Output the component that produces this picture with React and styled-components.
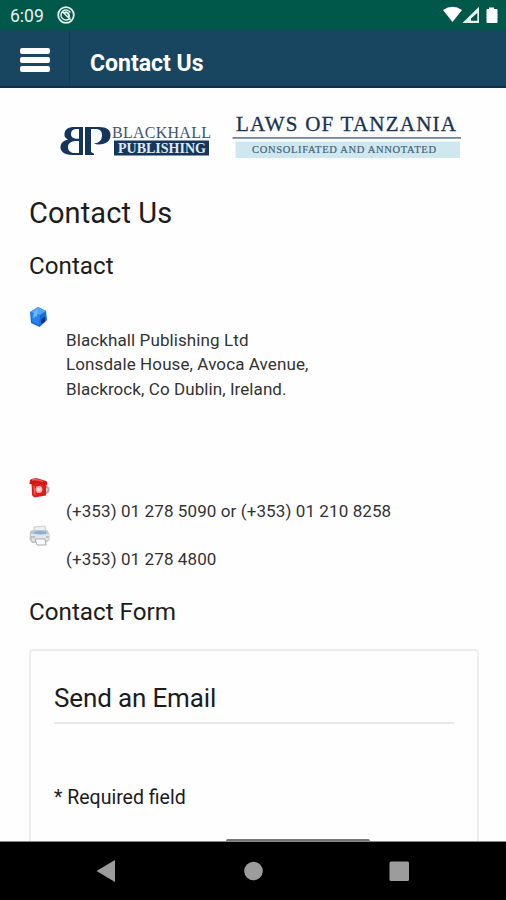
import React from "react";
import styled, { createGlobalStyle } from "styled-components";

const Global = createGlobalStyle`
  * { box-sizing: border-box; }
  body { margin: 0; background: #fff; }
  h1, h2, h3, p { margin: 0; font-weight: 400; }
`;

const Screen = styled.div`
  width: 506px;
  height: 900px;
  display: flex;
  flex-direction: column;
  overflow: hidden;
  background: #fefefe;
  color: #1c1c1c;
  font-family: Roboto, "Liberation Sans", sans-serif;
`;

const StatusBar = styled.div`
  flex: none;
  height: 30px;
  display: flex;
  align-items: center;
  justify-content: space-between;
  padding: 0 7px 0 10px;
  background: #00584b;
  color: #e8f3ef;
`;

const StatusGroup = styled.div`
  display: flex;
  align-items: center;
  gap: ${(p) => p.$gap || 0}px;
`;

const Clock = styled.span`
  width: 34px;
  font-size: 17.5px;
  line-height: 30px;
  padding-top: 2px;
  white-space: nowrap;
`;

const AppBar = styled.header`
  flex: none;
  height: 58px;
  display: flex;
  background: #18455f;
  border-bottom: 2px solid #0d2f50;
  margin-bottom: 1px;
`;

const MenuButton = styled.button`
  width: 70px;
  padding: 3px 0 0 20px;
  display: flex;
  flex-direction: column;
  justify-content: center;
  gap: 3px;
  border: 0;
  border-right: 1px solid #123c57;
  background: none;
`;

const MenuBar = styled.span`
  width: 30px;
  height: 6px;
  border-radius: 2px;
  background: #fff;
`;

const BarTitle = styled.div`
  padding: 6px 0 0 20px;
  font-size: 23px;
  font-weight: 700;
  line-height: 56px;
  letter-spacing: ${(p) => p.$track}px;
  color: #fff;
`;

const Content = styled.main`
  flex: 1;
  min-height: 0;
  overflow: hidden;
  padding: 0 27px 0 29px;
`;

const Logos = styled.div`
  height: 106px;
  margin: 0 -27px 0 -29px;
`;

const Heading = styled.h2`
  font-size: ${(p) => p.$size}px;
  line-height: 36px;
  letter-spacing: ${(p) => p.$track}px;
  margin-top: ${(p) => p.$top}px;
  white-space: nowrap;
`;

const Details = styled.dl`
  margin: 21.6px 0 0;
  font-size: 17px;
  line-height: 24.4px;
  color: #333;
`;

const Term = styled.dt`
  height: 22.2px;
  display: flex;
  align-items: center;
  svg { display: block; }
`;

const Value = styled.dd`
  margin: 0 0 ${(p) => p.$bottom || 0}px 37px;
`;

const Line = styled.div`
  letter-spacing: ${(p) => p.$track}px;
  white-space: nowrap;
`;

const FormCard = styled.form`
  margin-top: 18.6px;
  height: 300px;
  padding: 29px 23px 0 23px;
  border: 2px solid #ededed;
  border-radius: 4px;
`;

const Legend = styled.h3`
  height: 44px;
  font-size: 26px;
  line-height: 36px;
  letter-spacing: ${(p) => p.$track}px;
  border-bottom: 2px solid #e8e8e8;
`;

const Required = styled.p`
  margin-top: 62px;
  font-size: 19.5px;
  line-height: 24px;
  letter-spacing: ${(p) => p.$track}px;
`;

const Field = styled.input`
  display: block;
  width: 144px;
  height: 30px;
  margin: 29px 0 0 172px;
  border: 2px solid #777;
  border-radius: 2px;
`;

const NavBar = styled.nav`
  flex: none;
  height: 59px;
  border-top: 1px solid #888;
  background: #000;
  svg { display: block; }
`;

const SerifText = styled.text`
  font-family: "Liberation Serif", serif;
  font-size: ${(p) => p.$size}px;
  font-weight: ${(p) => p.$weight || 400};
`;

function NotificationIcon() {
  return (
    <svg width="18" height="18" viewBox="0 0 18 18" fill="none" stroke="#e4f1ed" strokeWidth="1.8">
      <circle cx="9" cy="9" r="7.8" />
      <path d="M13.3 11.5A5 5 0 1 1 13.4 6.7M5 5.2L13.5 13.7" strokeWidth="1.5" />
      <path d="M7 7.2q3-2.2 4.8 1.3l.2 2.6" strokeWidth="2" />
    </svg>
  );
}

function StatusIcons() {
  return (
    <svg width="56" height="18" viewBox="0 0 56 18">
      <path d="M0 4Q9.500 -2.500 19 4L9.500 16Z" fill="#fff" />
      <path d="M36 .8V17H19.500Z" fill="#e8f2ef" />
      <path d="M34.300 7V14.800H28V12.500Z" fill="#075248" />
      <path d="M46 1.500H51V3H53.500Q54.500 3 54.500 4V16Q54.500 17 53.500 17H44.500Q43.500 17 43.500 16V4Q43.500 3 44.500 3H46Z" fill="#fff" />
    </svg>
  );
}

function BrandLogos() {
  return (
    <svg width="506" height="106" viewBox="0 89 506 106">
      <g fill="#14365c" fillRule="evenodd">
        <path d="M83 127V155H72C64 155 60 151 60.500 146.500C61 142.500 64 140.500 68 139.500C65 138 64 136 64.500 133.500C65 129 69 127 74 127ZM79 129H76C72.500 129.500 71 131 71 134C71 137 73 139 79 138.800ZM79 141H75C70.500 141.500 68 143.500 68 147C68 151 71 153 75 153H79Z" />
        <path d="M85 127H99C107 127 110.500 130 110.500 135C110.500 141 106 144.500 99 144.500Q96 144.500 94 143.500Q102 142.500 102 135.500C102 131 100 129 95 129H91V152L94 153.700V155H85Z" />
        <rect x="114" y="140.500" width="95" height="15" />
      </g>
      <SerifText x="112" y="137.500" $size={16} textLength="99" fill="#3c5470">BLACKHALL</SerifText>
      <SerifText x="118" y="153" $size={15} $weight={700} textLength="88" lengthAdjust="spacingAndGlyphs" fill="#e0e9f0">PUBLISHING</SerifText>
      <SerifText x="236" y="131" $size={21} textLength="220" fill="#173454" stroke="#173454" strokeWidth=".3">LAWS OF TANZANIA</SerifText>
      <rect x="232.500" y="137" width="228.500" height="1.800" fill="#75869c" />
      <rect x="235.500" y="141.500" width="224.500" height="16.500" fill="#cfe7ef" />
      <SerifText x="252" y="153.200" $size={10.5} textLength="184" fill="#426477" stroke="#426477" strokeWidth=".2">CONSOLIFATED AND ANNOTATED</SerifText>
    </svg>
  );
}

function CubeIcon() {
  return (
    <svg width="20" height="22" viewBox="0 0 20 22">
      <path d="M9 1L17 5L18 14L10.500 21L2 17L1 6Z" fill="#1769dc" />
      <path d="M9 1L17 5L11 9L1 6Z" fill="#4fa4f8" />
      <path d="M2 7L11 9L10 19L3 15.500Z" fill="#2385f3" />
      <path d="M5 6L9 3L8 10L4 12Z" fill="#6db8fb" />
      <path d="M12 13L16 11V16L12 18Z" fill="#062c91" />
    </svg>
  );
}

function PhoneIcon() {
  return (
    <svg width="21" height="22" viewBox="0 0 21 22">
      <path d="M15 9Q20 10 19.500 13Q19 16 15 16" fill="none" stroke="#aaa" strokeWidth="2" />
      <path d="M2.500 5H17.500L17 18.500L5 20.500L3 18Z" fill="#df1d1b" />
      <path d="M1 3Q3 .8 8 1.300L17 4Q19 5 18 8L13 7L6 5.500L5 7.500L.5 7Z" fill="#cb1918" />
      <path d="M3 3Q7 2 14 4.500" fill="none" stroke="#ff6257" strokeWidth="1.300" />
      <circle cx="10" cy="12.500" r="3.4" fill="#f2b3ad" />
      <circle cx="10" cy="12.500" r="1.800" fill="#dce5e4" />
      <path d="M5 9L6 18" stroke="#fa6c64" strokeWidth="1.200" />
    </svg>
  );
}

function PrinterIcon() {
  return (
    <svg width="21" height="22" viewBox="0 0 21 22">
      <path d="M5 2L16 1L17 9H5Z" fill="#eff0f1" stroke="#c8cccf" />
      <path d="M1 6L4 5H18L20.500 9V15L17 18H3L.5 15Z" fill="#c2c7ca" />
      <path d="M2 9H20V14L17 16H3Z" fill="#e2e4e5" />
      <path d="M5 7Q11 5 17 7V9Q10 10 5 8.500Z" fill="#83b2df" />
      <path d="M6 14H16L17 20H8Z" fill="#fafafa" stroke="#a9aeb1" />
      <path d="M2 12H6M17 12H20" stroke="#969da1" />
    </svg>
  );
}

export default function App() {
  return (
    <Screen>
      <Global />
      <StatusBar>
        <StatusGroup $gap={13}>
          <Clock>6:09</Clock>
          <NotificationIcon />
        </StatusGroup>
        <StatusIcons />
      </StatusBar>
      <AppBar>
        <MenuButton aria-label="Menu">
          <MenuBar /><MenuBar /><MenuBar />
        </MenuButton>
        <BarTitle $track={0}>Contact Us</BarTitle>
      </AppBar>
      <Content>
        <Logos><BrandLogos /></Logos>
        <Heading as="h1" $size={29} $track={0.1} $top={0}>Contact Us</Heading>
        <Heading $size={24.2} $track={0} $top={17}>Contact</Heading>
        <Details>
          <Term><CubeIcon /></Term>
          <Value $bottom={75.6}>
            <Line $track={0.1}>Blackhall Publishing Ltd</Line>
            <Line $track={0.1}>Lonsdale House, Avoca Avenue,</Line>
            <Line $track={0.08}>Blackrock, Co Dublin, Ireland.</Line>
          </Value>
          <Term><PhoneIcon /></Term>
          <Value $bottom={2}><Line $track={0.1}>(+353) 01 278 5090 or (+353) 01 210 8258</Line></Value>
          <Term><PrinterIcon /></Term>
          <Value><Line $track={0.1}>(+353) 01 278 4800</Line></Value>
        </Details>
        <Heading $size={24.2} $track={0} $top={22.5}>Contact Form</Heading>
        <FormCard>
          <Legend $track={-0.15}>Send an Email</Legend>
          <Required $track={0}>* Required field</Required>
          <Field aria-label="Name" />
        </FormCard>
      </Content>
      <NavBar>
        <svg width="506" height="58" viewBox="0 842 506 58" fill="#9c9c9c">
          <path d="M96.500 871L115 860V882Z" />
          <circle cx="253.500" cy="871" r="9.300" />
          <rect x="389.500" y="861.500" width="19.500" height="19.500" rx="1.500" />
        </svg>
      </NavBar>
    </Screen>
  );
}
